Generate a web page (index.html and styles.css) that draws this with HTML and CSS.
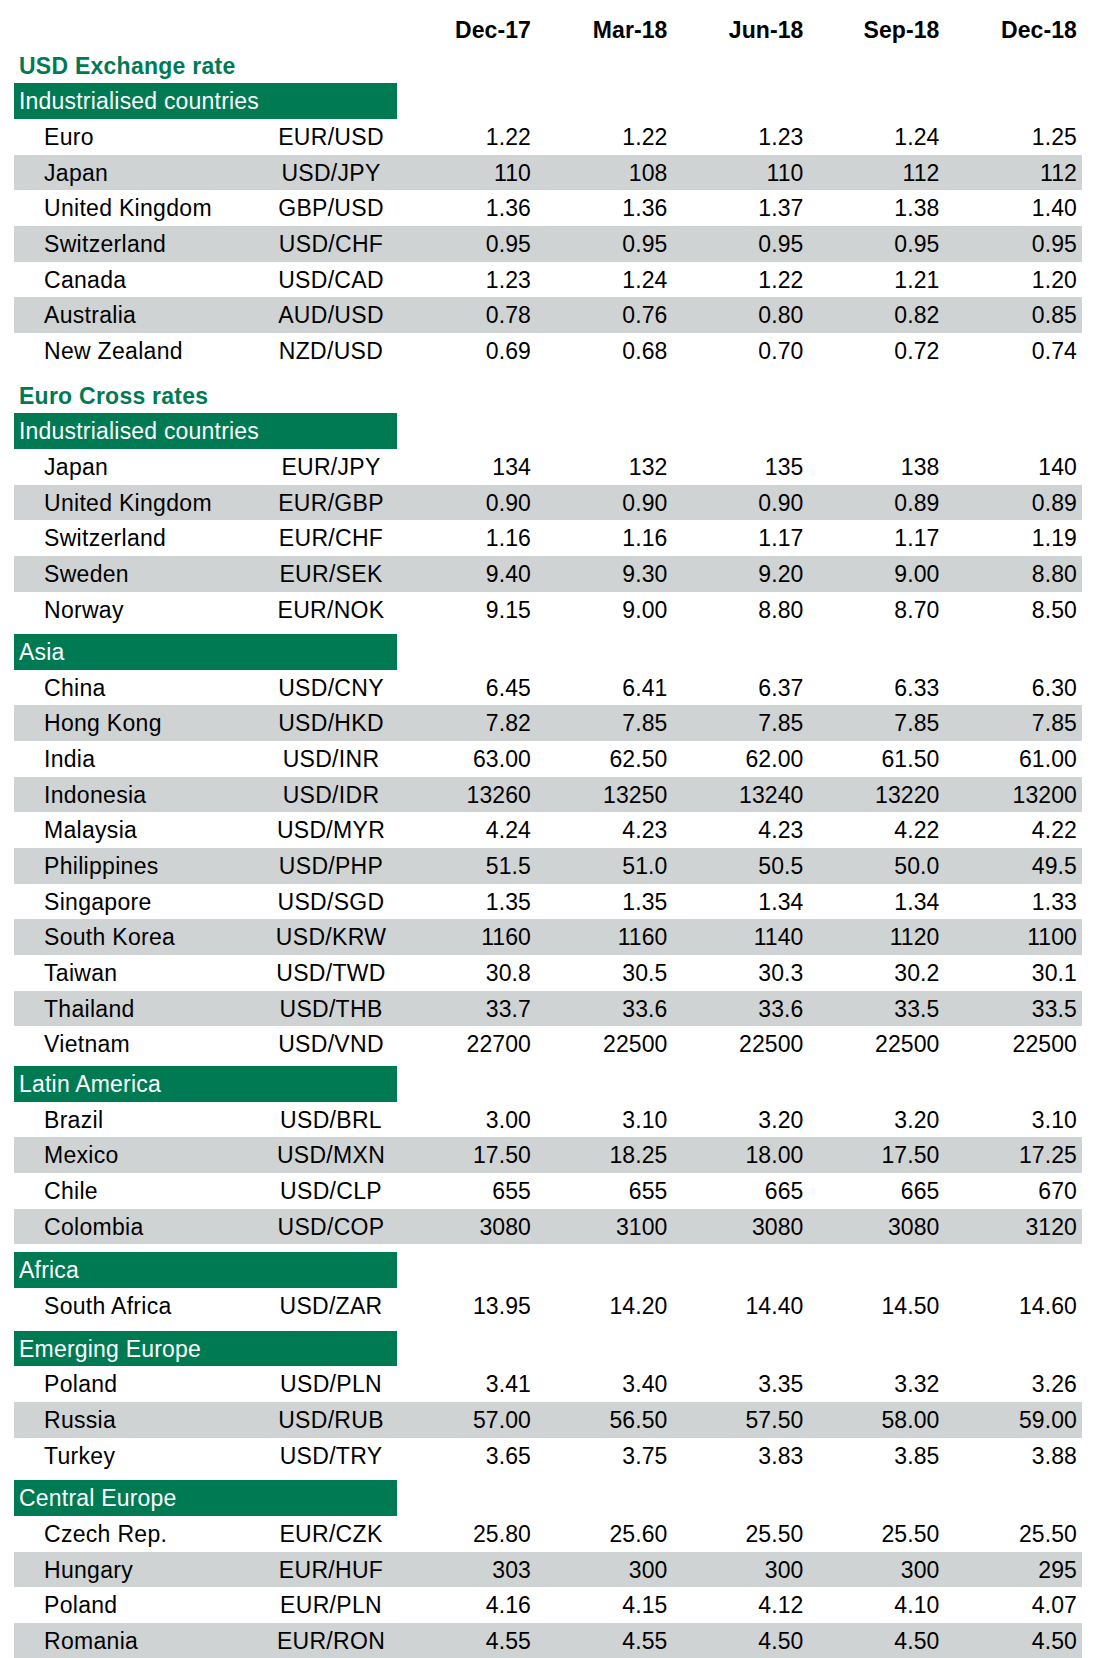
FILE: index.html
```html
<!DOCTYPE html>
<html lang="en">
<head>
<meta charset="utf-8">
<title>Exchange rate forecasts</title>
<link rel="stylesheet" href="styles.css">
</head>
<body>
<div class="sheet">
  <div class="row head">
    <span></span><span></span>
    <span class="num">Dec-17</span><span class="num">Mar-18</span><span class="num">Jun-18</span><span class="num">Sep-18</span><span class="num">Dec-18</span>
  </div>

  <div class="title">USD Exchange rate</div>
  <div class="group">
    <div class="bar">Industrialised countries</div>
    <div class="row"><span class="name">Euro</span><span class="pair">EUR/USD</span><span class="num">1.22</span><span class="num">1.22</span><span class="num">1.23</span><span class="num">1.24</span><span class="num">1.25</span></div>
    <div class="row"><span class="name">Japan</span><span class="pair">USD/JPY</span><span class="num">110</span><span class="num">108</span><span class="num">110</span><span class="num">112</span><span class="num">112</span></div>
    <div class="row"><span class="name">United Kingdom</span><span class="pair">GBP/USD</span><span class="num">1.36</span><span class="num">1.36</span><span class="num">1.37</span><span class="num">1.38</span><span class="num">1.40</span></div>
    <div class="row"><span class="name">Switzerland</span><span class="pair">USD/CHF</span><span class="num">0.95</span><span class="num">0.95</span><span class="num">0.95</span><span class="num">0.95</span><span class="num">0.95</span></div>
    <div class="row"><span class="name">Canada</span><span class="pair">USD/CAD</span><span class="num">1.23</span><span class="num">1.24</span><span class="num">1.22</span><span class="num">1.21</span><span class="num">1.20</span></div>
    <div class="row"><span class="name">Australia</span><span class="pair">AUD/USD</span><span class="num">0.78</span><span class="num">0.76</span><span class="num">0.80</span><span class="num">0.82</span><span class="num">0.85</span></div>
    <div class="row"><span class="name">New Zealand</span><span class="pair">NZD/USD</span><span class="num">0.69</span><span class="num">0.68</span><span class="num">0.70</span><span class="num">0.72</span><span class="num">0.74</span></div>
  </div>

  <div class="title gap-a">Euro Cross rates</div>
  <div class="group">
    <div class="bar">Industrialised countries</div>
    <div class="row"><span class="name">Japan</span><span class="pair">EUR/JPY</span><span class="num">134</span><span class="num">132</span><span class="num">135</span><span class="num">138</span><span class="num">140</span></div>
    <div class="row"><span class="name">United Kingdom</span><span class="pair">EUR/GBP</span><span class="num">0.90</span><span class="num">0.90</span><span class="num">0.90</span><span class="num">0.89</span><span class="num">0.89</span></div>
    <div class="row"><span class="name">Switzerland</span><span class="pair">EUR/CHF</span><span class="num">1.16</span><span class="num">1.16</span><span class="num">1.17</span><span class="num">1.17</span><span class="num">1.19</span></div>
    <div class="row"><span class="name">Sweden</span><span class="pair">EUR/SEK</span><span class="num">9.40</span><span class="num">9.30</span><span class="num">9.20</span><span class="num">9.00</span><span class="num">8.80</span></div>
    <div class="row"><span class="name">Norway</span><span class="pair">EUR/NOK</span><span class="num">9.15</span><span class="num">9.00</span><span class="num">8.80</span><span class="num">8.70</span><span class="num">8.50</span></div>
  </div>

  <div class="group gap-b">
    <div class="bar">Asia</div>
    <div class="row"><span class="name">China</span><span class="pair">USD/CNY</span><span class="num">6.45</span><span class="num">6.41</span><span class="num">6.37</span><span class="num">6.33</span><span class="num">6.30</span></div>
    <div class="row"><span class="name">Hong Kong</span><span class="pair">USD/HKD</span><span class="num">7.82</span><span class="num">7.85</span><span class="num">7.85</span><span class="num">7.85</span><span class="num">7.85</span></div>
    <div class="row"><span class="name">India</span><span class="pair">USD/INR</span><span class="num">63.00</span><span class="num">62.50</span><span class="num">62.00</span><span class="num">61.50</span><span class="num">61.00</span></div>
    <div class="row"><span class="name">Indonesia</span><span class="pair">USD/IDR</span><span class="num">13260</span><span class="num">13250</span><span class="num">13240</span><span class="num">13220</span><span class="num">13200</span></div>
    <div class="row"><span class="name">Malaysia</span><span class="pair">USD/MYR</span><span class="num">4.24</span><span class="num">4.23</span><span class="num">4.23</span><span class="num">4.22</span><span class="num">4.22</span></div>
    <div class="row"><span class="name">Philippines</span><span class="pair">USD/PHP</span><span class="num">51.5</span><span class="num">51.0</span><span class="num">50.5</span><span class="num">50.0</span><span class="num">49.5</span></div>
    <div class="row"><span class="name">Singapore</span><span class="pair">USD/SGD</span><span class="num">1.35</span><span class="num">1.35</span><span class="num">1.34</span><span class="num">1.34</span><span class="num">1.33</span></div>
    <div class="row"><span class="name">South Korea</span><span class="pair">USD/KRW</span><span class="num">1160</span><span class="num">1160</span><span class="num">1140</span><span class="num">1120</span><span class="num">1100</span></div>
    <div class="row"><span class="name">Taiwan</span><span class="pair">USD/TWD</span><span class="num">30.8</span><span class="num">30.5</span><span class="num">30.3</span><span class="num">30.2</span><span class="num">30.1</span></div>
    <div class="row"><span class="name">Thailand</span><span class="pair">USD/THB</span><span class="num">33.7</span><span class="num">33.6</span><span class="num">33.6</span><span class="num">33.5</span><span class="num">33.5</span></div>
    <div class="row"><span class="name">Vietnam</span><span class="pair">USD/VND</span><span class="num">22700</span><span class="num">22500</span><span class="num">22500</span><span class="num">22500</span><span class="num">22500</span></div>
  </div>

  <div class="group gap-c">
    <div class="bar">Latin America</div>
    <div class="row"><span class="name">Brazil</span><span class="pair">USD/BRL</span><span class="num">3.00</span><span class="num">3.10</span><span class="num">3.20</span><span class="num">3.20</span><span class="num">3.10</span></div>
    <div class="row"><span class="name">Mexico</span><span class="pair">USD/MXN</span><span class="num">17.50</span><span class="num">18.25</span><span class="num">18.00</span><span class="num">17.50</span><span class="num">17.25</span></div>
    <div class="row"><span class="name">Chile</span><span class="pair">USD/CLP</span><span class="num">655</span><span class="num">655</span><span class="num">665</span><span class="num">665</span><span class="num">670</span></div>
    <div class="row"><span class="name">Colombia</span><span class="pair">USD/COP</span><span class="num">3080</span><span class="num">3100</span><span class="num">3080</span><span class="num">3080</span><span class="num">3120</span></div>
  </div>

  <div class="group gap-d">
    <div class="bar">Africa</div>
    <div class="row"><span class="name">South Africa</span><span class="pair">USD/ZAR</span><span class="num">13.95</span><span class="num">14.20</span><span class="num">14.40</span><span class="num">14.50</span><span class="num">14.60</span></div>
  </div>

  <div class="group gap-e">
    <div class="bar">Emerging Europe</div>
    <div class="row"><span class="name">Poland</span><span class="pair">USD/PLN</span><span class="num">3.41</span><span class="num">3.40</span><span class="num">3.35</span><span class="num">3.32</span><span class="num">3.26</span></div>
    <div class="row"><span class="name">Russia</span><span class="pair">USD/RUB</span><span class="num">57.00</span><span class="num">56.50</span><span class="num">57.50</span><span class="num">58.00</span><span class="num">59.00</span></div>
    <div class="row"><span class="name">Turkey</span><span class="pair">USD/TRY</span><span class="num">3.65</span><span class="num">3.75</span><span class="num">3.83</span><span class="num">3.85</span><span class="num">3.88</span></div>
  </div>

  <div class="group gap-f">
    <div class="bar">Central Europe</div>
    <div class="row"><span class="name">Czech Rep.</span><span class="pair">EUR/CZK</span><span class="num">25.80</span><span class="num">25.60</span><span class="num">25.50</span><span class="num">25.50</span><span class="num">25.50</span></div>
    <div class="row"><span class="name">Hungary</span><span class="pair">EUR/HUF</span><span class="num">303</span><span class="num">300</span><span class="num">300</span><span class="num">300</span><span class="num">295</span></div>
    <div class="row"><span class="name">Poland</span><span class="pair">EUR/PLN</span><span class="num">4.16</span><span class="num">4.15</span><span class="num">4.12</span><span class="num">4.10</span><span class="num">4.07</span></div>
    <div class="row"><span class="name">Romania</span><span class="pair">EUR/RON</span><span class="num">4.55</span><span class="num">4.55</span><span class="num">4.50</span><span class="num">4.50</span><span class="num">4.50</span></div>
  </div>
</div>
</body>
</html>
```

FILE: styles.css
```css
html, body {
  margin: 0;
  padding: 0;
  background: #ffffff;
}

.sheet {
  width: 1068px;
  margin-left: 14px;
  padding-top: 12px;
  font-family: "Liberation Sans", Arial, sans-serif;
  font-size: 23px;
  color: #000000;
  --row: 35.67px;
}

.row {
  display: grid;
  grid-template-columns: 256px 122px 139px 136.5px 136px 136px 137.5px 5px;
  height: var(--row);
  line-height: 36.5px;
  white-space: nowrap;
}

.head {
  font-weight: bold;
}

.name {
  padding-left: 30px;
  letter-spacing: 0.3px;
}

.pair {
  text-align: center;
  letter-spacing: 0.3px;
}

.num {
  text-align: right;
  letter-spacing: 0.1px;
}

.title {
  height: var(--row);
  line-height: 36.5px;
  padding-left: 5px;
  font-weight: bold;
  letter-spacing: 0.25px;
  color: #007a53;
}

.bar {
  width: 383px;
  height: var(--row);
  line-height: 36.5px;
  box-sizing: border-box;
  padding-left: 5px;
  background: #007a53;
  color: #ffffff;
  letter-spacing: 0.2px;
  white-space: nowrap;
  overflow: hidden;
}

.group > .row:nth-child(odd) {
  background: #d0d3d4;
}

.gap-a { margin-top: 9px; }
.gap-b { margin-top: 7px; }
.gap-c { margin-top: 4px; }
.gap-d { margin-top: 8px; }
.gap-e { margin-top: 7px; }
.gap-f { margin-top: 7px; }
```
